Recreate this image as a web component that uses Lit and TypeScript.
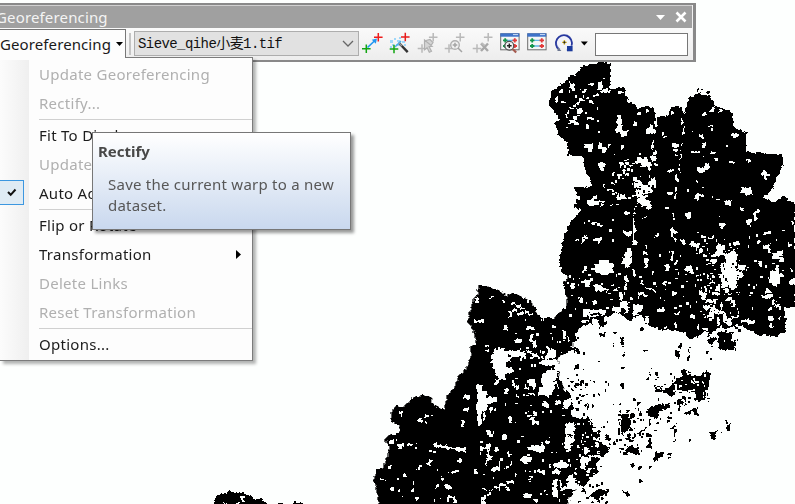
import { LitElement, html, svg, css } from "lit";
import { customElement } from "lit/decorators.js";

// Raster layer, described in sections. Each section has an origin and is drawn at one third scale.
interface Section {
  x: number;
  y: number;
  land: string[];
  holes: string;
  marks: string;
}

const sections: Section[] = [
  {
    x: 530, y: 56,
    land: [
      "150,30 185,28 210,18 242,22 238,98 285,97 297,130 290,140 315,145 320,160 345,150 373,155 377,185 410,178 425,153 455,155 462,170 470,145 485,120 510,112 540,122 555,150 605,170 612,215 650,230 648,288 758,297 760,325 730,390 700,425 735,440 757,420 795,445 795,455 130,455 140,435 185,405 182,375 165,340 158,300 115,298 110,260 85,235 75,205 88,190 72,165 55,145 65,105 95,85 120,62 150,48",
    ],
    holes: "118,80,14,16 86,102,12,8 76,120,8,14 92,132,10,10 176,82,16,7 204,78,12,20 216,98,18,8 218,62,8,8 160,102,8,8 148,130,16,6 166,122,10,6 178,132,12,10 190,116,18,6 140,138,10,6 128,146,12,6 118,154,12,6 110,164,8,10 106,176,8,10 142,160,14,12 132,180,10,12 118,192,16,12 128,200,18,8 168,184,14,6 182,182,10,10 168,210,8,8 142,174,8,6 262,178,10,50 258,206,22,26 272,224,22,16 310,202,12,9 348,218,26,16 358,208,12,12 396,230,10,6 402,240,6,6 162,264,26,12 174,272,14,12 204,260,12,20 212,272,20,18 234,264,6,8 274,268,6,14 206,322,18,14 214,336,8,8 246,348,8,8 270,322,12,8 284,318,12,8 300,326,10,10 318,306,36,16 334,318,28,14 364,302,16,12 350,326,12,14 290,350,8,8 308,362,14,14 316,374,24,22 326,386,40,24 350,376,16,14 362,366,14,20 318,402,26,16 322,420,20,14 338,430,18,14 276,338,12,6 244,378,10,6 218,384,8,12 228,398,24,8 274,418,14,10 262,424,12,8 176,430,16,18 208,434,10,8 426,262,22,12 430,278,14,10 434,292,10,4 452,264,4,22 450,294,4,28 446,326,5,24 438,354,5,24 436,390,4,18 434,412,4,18 426,338,6,8 414,340,10,8 414,408,12,8 422,168,10,12 454,186,5,18 458,210,5,16 456,228,7,8 480,224,9,5 506,234,14,8 514,242,8,6 536,206,14,8 542,216,6,10 604,234,20,9 538,158,18,8 546,150,8,18 516,172,12,7 568,160,8,9 482,284,24,6 518,262,6,14 540,286,16,8 556,306,8,8 596,314,20,9 650,312,16,6 504,332,34,9 504,342,18,8 526,324,10,18 692,350,28,10 702,344,10,28 634,394,28,14 644,408,22,10 472,398,9,10 504,414,18,8 496,420,12,10 586,432,16,12 498,376,6,6 366,250,6,28 376,180,5,34 370,286,8,12 504,104,8,8 516,104,8,12 526,104,10,6 268,104,12,6 286,108,8,12 210,104,30,5 324,168,8,8 348,162,8,6",
    marks: "502,100,6,4 512,98,6,4 532,106,4,4",
  },
  {
    x: 530, y: 190,
    land: [
      "130,-10 735,-10 718,6 700,23 718,36 735,38 757,20 770,34 795,48 795,350 765,355 765,400 750,430 720,440 680,430 620,402 600,415 570,405 550,430 525,425 490,444 470,440 460,420 430,422 380,415 345,400 340,375 315,380 300,395 270,370 245,370 240,395 205,400 165,405 140,420 138,455 -5,455 0,345 18,350 15,370 50,405 75,425 80,390 85,370 110,350 110,320 100,290 115,265 95,245 87,215 95,170 110,120 125,90 155,62 135,50 150,30",
      "150,0 200,0 200,25 150,38",
      "565,430 580,425 608,430 605,450 560,450",
    ],
    holes: "190,18,12,10 170,28,18,16 184,36,24,8 214,42,9,6 240,44,6,5 268,12,18,8 262,20,14,10 318,10,18,14 322,24,16,18 336,34,24,14 350,44,14,12 344,14,10,8 414,8,14,8 496,14,24,8 586,30,16,14 632,0,30,10 630,50,10,12 312,48,4,26 310,84,4,70 306,154,14,12 286,66,12,7 334,80,14,5 246,88,8,6 182,96,20,6 200,102,20,6 280,124,26,8 286,132,14,5 190,144,26,10 200,154,12,6 160,138,12,10 152,150,14,6 136,146,8,6 372,136,14,6 380,128,8,14 404,52,14,8 428,70,4,28 466,68,18,14 472,82,10,6 568,98,16,10 574,108,8,6 648,90,16,16 656,84,6,20 672,64,10,30 680,58,8,12 702,124,20,8 656,134,5,16 422,120,22,12 424,112,5,28 430,144,8,8 452,148,14,16 498,122,8,5 514,136,14,8 536,140,14,8 484,152,10,18 496,160,12,10 506,178,10,14 610,154,20,12 284,186,16,46 276,204,30,18 292,178,14,22 346,166,5,10 342,184,10,12 346,204,7,30 196,218,52,30 208,210,30,12 214,246,20,8 162,228,10,14 184,230,8,8 308,238,6,20 286,258,8,20 282,286,8,14 406,224,12,20 468,228,20,14 478,242,10,8 424,184,4,28 434,212,8,14 446,194,6,6 400,272,8,14 424,306,16,8 166,270,14,20 194,284,14,20 206,292,12,10 220,296,14,8 190,284,24,10 130,290,8,6 124,288,8,12 146,324,14,12 190,334,10,10 236,308,8,8 252,294,10,10 330,270,10,16 348,290,10,8 358,296,18,8 326,306,20,8 340,314,14,8 388,354,14,12 434,366,16,10 564,166,20,28 554,184,12,18 544,208,18,12 524,218,16,8 584,188,36,30 574,218,44,24 574,242,52,30 594,270,26,24 576,270,14,24 602,182,18,30 624,226,24,14 626,242,14,18 540,194,16,8 520,194,12,8 548,236,6,6 530,252,8,16 540,274,14,8 558,284,12,20 582,296,14,18 548,306,22,10 506,300,14,14 516,310,10,20 528,326,18,14 520,344,34,14 540,358,24,14 532,370,20,12 586,320,20,12 602,330,12,20 566,360,14,10 578,370,10,28 560,382,10,22 602,378,16,10 590,386,12,18 480,372,14,16 682,154,8,6 700,164,18,12 716,176,8,14 726,190,22,20 740,180,20,18 746,202,18,14 736,226,12,26 720,244,26,20 716,264,34,16 726,280,16,8 744,250,14,14 704,298,20,12 692,314,24,12 716,312,10,16 726,330,10,14 736,342,14,10 718,350,8,10 688,214,8,16 780,268,15,18 782,234,8,12 778,160,8,10 782,94,8,8 266,308,12,22 270,334,18,20 282,352,16,12 248,350,24,16 286,336,8,36 300,320,8,10 310,344,26,20 308,364,16,12 236,376,30,30 164,366,10,10 172,360,40,10 178,374,28,8 186,388,22,14 212,360,12,14 222,382,14,14 158,390,10,10 344,378,12,20 432,400,8,12 654,390,20,12 714,378,14,16 744,380,10,8",
    marks: "250,424,12,7 330,414,9,8 206,408,4,8 210,430,14,10 270,440,10,8 560,428,8,6 530,432,8,8",
  },
  {
    x: 530, y: 320,
    land: [
      "-5,-5 150,-5 142,30 115,60 115,95 85,112 85,140 70,150 95,185 95,205 120,220 130,258 125,290 185,300 190,330 210,345 205,365 240,385 220,408 200,430 205,455 180,480 162,500 130,490 115,520 105,555 -5,555",
      "370,-5 770,-5 765,40 725,52 675,38 620,12 540,18 500,50 480,60 465,40 420,25 370,20",
      "200,0 230,0 226,18 210,24",
      "372,195 400,205 420,200 435,180 455,170 460,145 470,165 510,170 530,152 542,160 538,195 520,240 495,245 500,215 470,215 440,210 425,235 405,215 380,215",
      "345,275 370,255 420,250 420,265 390,270 385,290 360,290",
      "460,280 505,262 505,292 485,276 465,288",
      "562,60 595,38 600,60 620,70 610,92 570,90",
      "530,60 560,50 552,70 540,75",
      "538,340 560,330 556,356 542,356",
      "275,285 290,280 305,300 298,325 285,335 280,350 272,330",
      "320,340 352,318 350,326 325,342",
      "370,420 378,394 398,408 385,418 374,428",
      "180,525 205,508 238,510 230,525 210,528 205,542 185,532",
      "280,395 300,380 322,385 332,410 318,405 300,395 282,405",
      "275,512 295,518 296,528 280,518",
      "320,485 335,476 340,484 326,490",
    ],
    holes: "66,14,12,10 100,34,8,12 54,88,22,22 44,108,14,8 0,42,10,26 8,62,10,22 40,126,14,8 66,116,18,18 74,132,18,18 0,178,16,24 38,156,20,50 46,180,22,44 28,202,30,24 62,196,14,10 60,164,20,12 40,248,18,14 74,242,20,10 8,274,12,14 100,240,16,24 112,234,10,20 6,304,22,12 106,312,26,28 116,322,18,10 108,344,10,40 46,360,18,7 32,366,10,18 6,376,24,14 8,382,32,10 162,384,14,16 176,404,18,14 158,414,24,10 152,424,12,20 172,440,12,18 72,428,16,16 98,426,12,18 24,448,10,12 36,456,10,8 66,454,14,8 70,480,10,20 118,466,14,28 108,488,24,20 94,500,14,12 70,506,14,24 40,508,6,8 10,536,14,12 186,408,28,6 190,354,14,6 196,370,10,8 500,15,8,12 520,24,14,8 446,196,10,8 476,206,20,8 434,196,8,14 490,184,20,5 506,176,6,10 400,18,14,5 580,60,8,10 634,0,20,5 718,10,12,10",
    marks: "274,58,9,14 276,76,6,4 278,92,6,6 280,106,4,4 248,70,4,8 340,90,10,5 204,122,8,5 136,84,10,14 138,136,8,12 274,142,9,8 272,190,9,20 362,140,5,6 356,160,10,8 350,174,8,6 446,70,9,14 434,94,12,18 440,102,14,12 476,84,5,18 472,104,5,16 528,94,7,8 540,116,6,6 252,34,10,8 330,24,8,6 124,182,12,5 136,188,14,6 150,182,8,14 146,196,10,6 162,200,6,5 188,182,6,6 226,208,5,10 204,222,5,5 172,252,6,14 186,256,10,5 158,280,6,8 168,288,8,10 152,292,8,6 308,234,6,8 268,248,6,6 322,250,8,6 266,274,10,6 288,270,10,6 302,280,10,14 266,298,5,20 264,322,5,22 308,302,6,10 356,296,6,20 374,306,12,5 300,326,8,8 294,342,6,14 286,350,12,10 300,356,12,8 310,346,6,8 350,342,16,10 356,356,8,10 350,374,20,8 354,364,8,10 320,376,6,10 302,362,6,8 300,374,8,10 278,396,12,8 302,430,12,10 328,436,7,12 358,438,6,5 414,398,8,6 414,412,8,6 388,398,12,14 412,290,10,8 414,300,6,8 420,320,6,8 428,318,10,5 434,308,4,10 432,336,6,5 434,358,6,5 478,358,6,4 572,336,5,4 584,300,6,12 592,316,8,16 598,308,4,12 444,236,6,34 450,246,8,8 464,238,5,18 474,244,10,6 432,246,8,5 456,150,14,20 474,152,8,8 424,24,10,10 228,346,8,14 232,354,12,8 234,306,4,5 206,320,6,4 218,316,4,8 204,332,6,8 224,350,8,8 250,366,6,8 240,370,4,6 356,152,5,4 586,60,14,12 204,540,6,6 228,542,6,6 172,530,6,8 146,540,6,5 156,510,8,6 184,544,6,5",
  },
  {
    x: 370, y: 270,
    land: [
      "325,48 345,47 400,65 405,80 430,68 455,80 485,95 495,125 540,165 540,190 560,165 555,145 575,120 590,115 590,65 580,40 595,20 580,0 660,0 660,120 635,150 630,170 610,190 610,220 585,250 565,265 565,320 580,350 585,380 600,420 610,450 660,455 660,600 625,640 590,705 25,705 20,660 10,635 20,600 35,600 50,560 60,530 45,510 55,495 85,490 90,470 62,450 65,420 80,405 100,410 130,380 160,375 185,385 190,405 222,420 230,375 250,360 265,320 285,300 305,255 300,230 318,220 310,180 292,155 300,120 310,90 320,80",
    ],
    holes: "316,86,10,12 356,80,16,5 312,150,30,9 398,176,16,7 402,166,10,10 400,90,8,8 422,98,14,6 436,106,14,6 450,114,16,6 464,122,12,6 476,130,14,5 426,116,14,10 440,126,18,8 418,126,8,14 472,172,22,7 436,206,20,10 344,226,14,6 344,240,12,6 372,236,30,20 364,256,50,24 368,278,36,22 376,296,34,20 388,310,18,20 406,290,22,16 400,240,30,14 424,242,20,20 444,244,20,18 376,328,10,14 404,262,22,10 472,240,10,10 486,250,16,10 538,238,16,26 508,272,16,14 526,270,20,18 544,292,16,34 530,300,26,30 512,324,28,14 518,340,20,26 522,360,16,18 472,328,22,12 490,336,8,22 464,342,8,14 476,368,18,8 438,348,8,8 428,342,7,10 406,358,7,18 438,374,10,8 322,346,14,108 334,362,18,62 350,380,32,20 338,426,8,26 322,450,10,16 358,412,8,14 372,414,7,8 278,380,18,7 284,374,14,8 280,414,16,9 272,448,10,24 278,446,8,14 516,400,16,12 522,392,8,8 464,424,10,8 474,434,12,8 484,440,12,14 492,454,14,7 480,446,8,8 556,394,16,5 418,440,8,20 428,452,6,8 350,484,12,12 356,492,12,10 400,496,10,14 454,494,9,8 528,510,14,10 84,424,14,10 92,432,8,8 146,444,9,16 140,450,20,6 164,432,12,8 182,434,8,5 164,454,5,8 60,510,10,8 80,522,22,9 84,530,9,7 112,520,14,7 186,518,14,8 192,524,40,9 230,530,34,7 256,532,30,10 280,534,8,12 330,532,26,6 348,522,14,14 350,538,8,34 354,558,12,12 372,592,22,12 362,596,20,8 386,574,5,22 346,574,6,14 376,532,10,12 412,546,9,14 472,532,18,8 486,526,22,7 496,536,18,9 510,528,12,16 454,560,26,10 458,570,16,12 472,560,12,12 420,574,6,10 408,588,6,8 170,576,14,10 178,570,8,8 140,594,14,7 146,584,6,12 58,584,9,9 246,604,18,9 258,600,8,8 98,608,9,10 264,566,8,12 312,596,10,16 340,608,6,8 194,644,12,7 224,646,16,12 212,622,6,8 128,634,5,8 60,654,12,10 80,656,10,9 122,658,9,8 136,682,12,12 34,626,9,7 232,676,18,8 248,682,10,16 336,656,34,5 368,648,22,6 386,642,22,5 410,634,18,5 406,650,14,8 412,658,10,6 462,668,16,16 472,674,12,10 334,678,14,12 334,694,12,8 510,602,16,8 504,596,8,8 550,604,20,8 558,596,9,8 536,582,7,8 556,626,5,30 550,650,5,24 568,634,5,18 566,570,12,20 586,580,10,12 586,500,16,38 588,464,24,16 586,476,16,16 604,490,8,30 594,524,8,18 634,562,20,10 630,568,10,10 640,574,16,7 590,618,22,14 598,630,28,12 606,640,16,18 590,642,10,10 626,652,20,24 606,664,18,24 594,690,22,12 560,668,5,18 612,590,10,9 600,46,16,10 606,40,9,18 628,88,12,8 646,30,14,18 640,120,20,18 632,150,28,6 580,190,8,10 592,202,5,10 560,374,8,5 550,336,10,8 560,342,8,12 478,618,12,7 470,626,9,4 434,612,6,5",
    marks: "604,232,10,8 620,240,8,8 594,232,8,12 616,286,8,12 602,336,8,7 614,346,10,6 606,356,5,6 636,376,5,6 644,340,10,7 650,400,5,12 642,402,5,5 636,444,5,8 604,402,6,10 616,412,6,5 566,330,8,14 592,324,6,4 546,286,8,10",
  },
  {
    x: 200, y: 380,
    land: [
      "45,352 62,340 82,338 85,332 98,336 130,340 158,350 162,360 178,356 195,360 205,375 45,375",
      "280,368 296,366 312,372 312,375 280,375",
      "235,368 250,370 250,375 235,375",
    ],
    holes: "122,348,9,16 126,360,8,7 70,368,10,5 108,368,10,4",
    marks: "",
  },
];

// Fine grain: x, y, width, height, number of cells, land (1) or gap (0).
const grain: number[][] = [
  [560, 84, 42, 48, 14, 0], [612, 150, 44, 48, 55, 0], [580, 185, 60, 60, 8, 0],
  [695, 238, 45, 82, 110, 0], [642, 250, 50, 60, 26, 0], [565, 270, 75, 50, 38, 0],
  [745, 230, 45, 80, 26, 0], [655, 120, 80, 100, 8, 0], [500, 350, 50, 60, 26, 0],
  [495, 295, 60, 55, 14, 0], [480, 430, 105, 70, 36, 0], [380, 420, 100, 80, 14, 0],
  [570, 420, 30, 60, 50, 0], [540, 330, 24, 90, 22, 0], [655, 370, 52, 34, 45, 0],
  [572, 318, 12, 100, 12, 1], [615, 408, 30, 45, 32, 1], [588, 425, 18, 45, 24, 1],
  [655, 370, 54, 32, 36, 1], [694, 250, 50, 70, 60, 1], [575, 380, 40, 32, 8, 1],
  [705, 325, 34, 24, 26, 1], [630, 166, 28, 34, 26, 1], [640, 410, 40, 32, 10, 1],
  [552, 380, 30, 30, 12, 1], [575, 478, 30, 26, 14, 1],
];

function grainPaths(): [string, string] {
  let seed = 20731;
  const next = () => (seed = (seed * 16807) % 2147483647) / 2147483647;
  const out: [string, string] = ["", ""];
  for (const [x, y, w, h, n, kind] of grain) {
    for (let i = 0; i < n; i++) {
      const px = Math.floor(x + next() * w);
      const py = Math.floor(y + next() * h);
      const a = 1 + Math.floor(next() * 2.6);
      const b = 1 + Math.floor(next() * 2.6);
      out[kind] += `M${px} ${py}h${a}v${b}h${-a}z`;
    }
  }
  return out;
}

const rects = (s: string) =>
  s.split(" ").filter(Boolean).map((r) => {
    const [x, y, w, h] = r.split(",").map(Number);
    return `M${x} ${y}h${w}v${h}h${-w}z`;
  }).join("");

@customElement("raster-layer")
class RasterLayer extends LitElement {
  static styles = css`
    :host, svg { display: block; width: 795px; height: 504px; }
    .land { fill: #000; }
    .gap { fill: #fdfffe; }
  `;
  render() {
    const [gaps, cells] = grainPaths();
    const at = (s: Section) => `translate(${s.x} ${s.y}) scale(.33333)`;
    return html`<svg viewBox="0 0 795 504" shape-rendering="crispEdges">
      <defs>
        <filter id="rough" filterUnits="userSpaceOnUse" x="0" y="0" width="800" height="510" color-interpolation-filters="sRGB">
          <feTurbulence type="fractalNoise" baseFrequency=".24" numOctaves="2" seed="7" />
          <feDisplacementMap in="SourceGraphic" scale="5" xChannelSelector="R" yChannelSelector="G" />
        </filter>
      </defs>
      <g filter="url(#rough)">
        ${sections.map((s) => svg`<g class="land" transform=${at(s)}>${s.land.map((p) => svg`<polygon points=${p} />`)}</g>`)}
        ${sections.map((s) => svg`<path class="gap" transform=${at(s)} d=${rects(s.holes)} />`)}
        ${sections.map((s) => svg`<path class="land" transform=${at(s)} d=${rects(s.marks)} />`)}
      </g>
      <path class="gap" d=${gaps} />
      <path class="land" d=${cells} />
    </svg>`;
  }
}

const cross = (x: number, y: number, c: string) =>
  svg`<path d="M${x - 4.3} ${y}h8.6M${x} ${y - 4.3}v8.6" stroke=${c} stroke-width="1.5" fill="none" />`;

const tableIcon = svg`
  <rect x="4.7" y="1.8" width="18.4" height="16" fill="#f4f6f6" stroke="#6c6c6c" />
  <path d="M4.3 1.3h19v3.4h-19z" fill="#3e73c9" /><path d="M17 2.6h5" stroke="#cfe0f8" stroke-width="1" />
  <path d="M10 8.3h8M10 14h8" stroke="#62b5e8" stroke-width="1.3" />
  <path d="M7 8.3h4.4M9.2 6.2v4.2M7 14h4.4M9.2 11.9v4.2" stroke="#15964a" stroke-width="1.8" />
  <path d="M16.6 8.3h4.4M18.8 6.2v4.2M16.6 14h4.4M18.8 11.9v4.2" stroke="#e23a3a" stroke-width="1.8" />`;

const icons = [
  svg`<path d="M8.5 15.5L16.5 8" stroke="#2196f0" stroke-width="1.6" /><path d="M18 6.6l-5.2 1.2 4 4z" fill="#2196f0" />
    ${cross(19.3, 5.3, "#ee1c1c")}${cross(7.3, 16.7, "#12a512")}`,
  svg`<path d="M4 8h3v3h-3zM8 6h2v2h-2zM11 8h3v2h-3zM13 5h2v2h-2zM6 12h2v2h-2zM10 12h4v2h-4zM4 14h2v2h-2zM16 9h3v2h-3zM12 10h3v3h-3zM18 12h2v2h-2z" fill="#9fd8fa" />
    <path d="M9 15l6-6" stroke="#4aaeea" stroke-width="1.5" />
    <path d="M13.5 11.5l8.2 8.6" stroke="#333" stroke-width="2.4" /><path d="M13 11l3 3" stroke="#999" stroke-width="1.5" />
    ${cross(19.3, 5, "#e81c1c")}${cross(8, 17, "#12a512")}`,
  svg`${cross(19.2, 5.3, "#b9b9b9")}${cross(8, 16.5, "#b9b9b9")}
    <path d="M10.5 8l7.6 6.4-3 .3 2.4 4.6-2.2 1-2.2-4.6-2.6 2zM12 8.5l4-1 3 3-2 3" fill="#d5d5d5" stroke="#b0b0b0" stroke-width="1.2" />`,
  svg`${cross(19.2, 5.3, "#b9b9b9")}${cross(8, 16.5, "#b9b9b9")}
    <circle cx="14" cy="13" r="4.3" fill="#f1f1f1" stroke="#b0b0b0" stroke-width="1.4" /><path d="M11.7 13h4.6M14 10.7v4.6M17 16l4 4" stroke="#a4a4a4" stroke-width="1.5" />`,
  svg`${cross(19.2, 5.3, "#b9b9b9")}${cross(8, 16.5, "#b9b9b9")}
    <path d="M12 11.5l7 7.5M19 11.5l-7 7.5" stroke="#a8a8a8" stroke-width="2.4" /><path d="M12.5 11l3 2.5" stroke="#bbb" stroke-width="2" />`,
  svg`${tableIcon}<circle cx="13.3" cy="13.7" r="4.4" fill="#f3f3f3" stroke="#555" stroke-width="1.2" />
    <path d="M11 13.7h4.6M13.3 11.4v4.6" stroke="#222" stroke-width="1.4" /><path d="M16.6 17l3.6 3.6" stroke="#a55b50" stroke-width="2.2" />`,
  tableIcon,
  svg`<circle cx="13.2" cy="10.6" r="7.9" fill="#f2f3fa" stroke="#9aa4d4" stroke-width="1.2" />
    <path d="M8 17.6A8 8 0 1 1 20.6 13.4" fill="none" stroke="#27379e" stroke-width="1.7" />
    <path d="M8.500 19.500h7v-4h-6z" fill="#f1f1f1" />
    <path d="M16 19.3v-5.3h5.6v5.3z" fill="#1b3a9c" /><path d="M7 15l3.4 4h-4z" fill="#6c7690" />
    <path d="M11 10.4h4.8M13.4 8v4.8" stroke="#d9b92c" stroke-width="1.4" /><circle cx="13.4" cy="10.4" r="1.1" fill="#222" />`,
];

interface Entry { label?: string; off?: boolean; checked?: boolean; sub?: boolean }
const entries: Entry[] = [
  { label: "Update Georeferencing", off: true },
  { label: "Rectify...", off: true },
  {},
  { label: "Fit To Display" },
  { label: "Update Display", off: true },
  { label: "Auto Adjust", checked: true },
  {},
  { label: "Flip or Rotate" },
  { label: "Transformation", sub: true },
  { label: "Delete Links", off: true },
  { label: "Reset Transformation", off: true },
  {},
  { label: "Options..." },
];

@customElement("app-root")
class AppRoot extends LitElement {
  static styles = css`
    :host {
      display: block; position: relative; width: 795px; height: 504px; overflow: hidden;
      background: #fdfffe; color: #1a1a1a;
      font: 15px/22px "Noto Sans", "Noto Sans CJK SC", sans-serif; letter-spacing: .27px;
    }
    * { box-sizing: border-box; }
    .map { position: absolute; inset: 0; }
    .bar {
      position: absolute; left: 0; top: 3px; width: 696px; height: 59px;
      border: 2px solid #898989; border-width: 2px 3px 2px 0; background: #f1f1f1;
    }
    .title {
      display: flex; align-items: center; justify-content: space-between; height: 23px; width: 692px;
      border-top: 1px solid #d0d0d0; background: #a0a0a0; color: #f4f4f4; line-height: 20px;
    }
    .title span { margin-left: -4px; letter-spacing: .15px; }
    .title svg { width: 32px; height: 16px; margin-right: 4px; }
    .row { display: flex; align-items: flex-start; height: 32px; background: linear-gradient(#fafafa, #ededed); width: 692px; }
    .menubtn {
      display: flex; align-items: center; width: 126px; height: 29px; margin-top: 1px; background: #fdfdfd;
      border: 1px solid #777; border-width: 1px 1px 0 0; white-space: nowrap; letter-spacing: .1px;
    }
    .menubtn span { width: 112px; margin-top: -1px; }
    .menubtn svg { width: 7px; height: 4px; margin-left: 4px; }
    .grip { width: 2px; height: 22px; margin: 5px 3px 0 3px; background: #c4c4c4; }
    .combo {
      display: flex; align-items: center; justify-content: space-between; width: 225px; height: 25px; margin-top: 3px;
      border: 1px solid #adadad; background: #e1e1e1; padding: 0 4px 0 3px; color: #111;
      font: 14px/22px "Liberation Mono", "Noto Sans CJK SC", monospace; letter-spacing: -.58px; white-space: pre;
    }
    .combo svg { width: 12px; height: 8px; }
    .icons { display: flex; margin-top: 4px; }
    .icon { width: 27.4px; height: 24px; flex: none; }
    .drop { width: 17px; height: 24px; }
    .field { width: 93px; height: 23px; margin-top: 5px; margin-left: -.2px; border: 1px solid #777; background: #fff; }
    .menu {
      position: absolute; left: 0; top: 57px; width: 253px; height: 304px; padding-top: 2px;
      background: linear-gradient(90deg, #fcfcfc, #efefef 29px, #fdfdfd 29px);
      border: 1px solid #7b7b7b; border-width: 1px 1px 1px 0; box-shadow: 3px 3px 3px rgba(0,0,0,.3);
    }
    .cover { position: absolute; left: 0; top: 56px; width: 125px; height: 4px; background: #fdfdfd; }
    .item { display: flex; align-items: center; height: 29px; color: #1c1c1c; white-space: nowrap; }
    .off { color: #b0b0b0; }
    .sep { height: 3px; margin-left: 39px; border-top: 1px solid #fdfdfd; border-bottom: 1px solid #fdfdfd; background: #d0d0d0; }
    .mark { width: 39px; flex: none; display: flex; }
    .tick { display: block; width: 25px; height: 25px; margin: -2px 0 0 -1px; border: 1px solid #3c97e0; background: #dfebf4; }
    .text { flex: 1; margin-top: -2px; }
    .sub { width: 5px; height: 9px; margin-right: 11px; }
    .tip {
      position: absolute; left: 92px; top: 132px; width: 259px; height: 98px; padding: 7px 5px;
      border: 1px solid #777; background: linear-gradient(#fff, #c9d8ee); color: #575757;
      box-shadow: 3px 3px 3px rgba(0,0,0,.4);
    }
    .tip b { display: block; line-height: 22px; color: #484848; letter-spacing: 0; }
    .tip p { margin: 12px 0 0 10px; line-height: 21px; white-space: nowrap; letter-spacing: .24px; }
  `;

  render() {
    return html`
      <raster-layer class="map"></raster-layer>
      <div class="bar">
        <div class="title">
          <span>Georeferencing</span>
          <svg viewBox="0 0 32 16"><path d="M0 6h9l-4.500 5z" fill="#fff" /><path d="M20.500 3.500l9 9M29.500 3.500l-9 9" stroke="#fff" stroke-width="2.600" /></svg>
        </div>
        <div class="row">
          <div class="menubtn"><span>Georeferencing</span><svg viewBox="0 0 7 4"><path d="M0 0h7l-3.500 4z" /></svg></div>
          <div class="grip"></div>
          <div class="combo"><span>Sieve_qihe小麦1.tif</span>
            <svg viewBox="0 0 12 8"><path d="M1 1l5 5 5-5" fill="none" stroke="#666" stroke-width="1.300" /></svg></div>
          <div class="icons">
            ${icons.map((i) => html`<svg class="icon" viewBox="0 0 27.4 24">${i}</svg>`)}
            <svg class="drop" viewBox="0 0 17 24"><path d="M2.800 9.500h7l-3.500 4z" /></svg>
          </div>
          <div class="field"></div>
        </div>
      </div>
      <div class="menu">
        ${entries.map((e) => e.label
          ? html`<div class="item ${e.off ? "off" : ""}">
              <span class="mark">${e.checked
                ? html`<svg class="tick" viewBox="0 0 23 23"><path d="M8 11l2.700 2.800L15.500 8.500" fill="none" stroke="#111" stroke-width="2" /></svg>`
                : ""}</span>
              <span class="text">${e.label}</span>
              ${e.sub ? html`<svg class="sub" viewBox="0 0 5 9"><path d="M0 0l5 4.500-5 4.500z" /></svg>` : ""}
            </div>`
          : html`<div class="sep"></div>`)}
      </div>
      <div class="cover"></div>
      <div class="tip">
        <b>Rectify</b>
        <p>Save the current warp to a new<br />dataset.</p>
      </div>
    `;
  }
}
